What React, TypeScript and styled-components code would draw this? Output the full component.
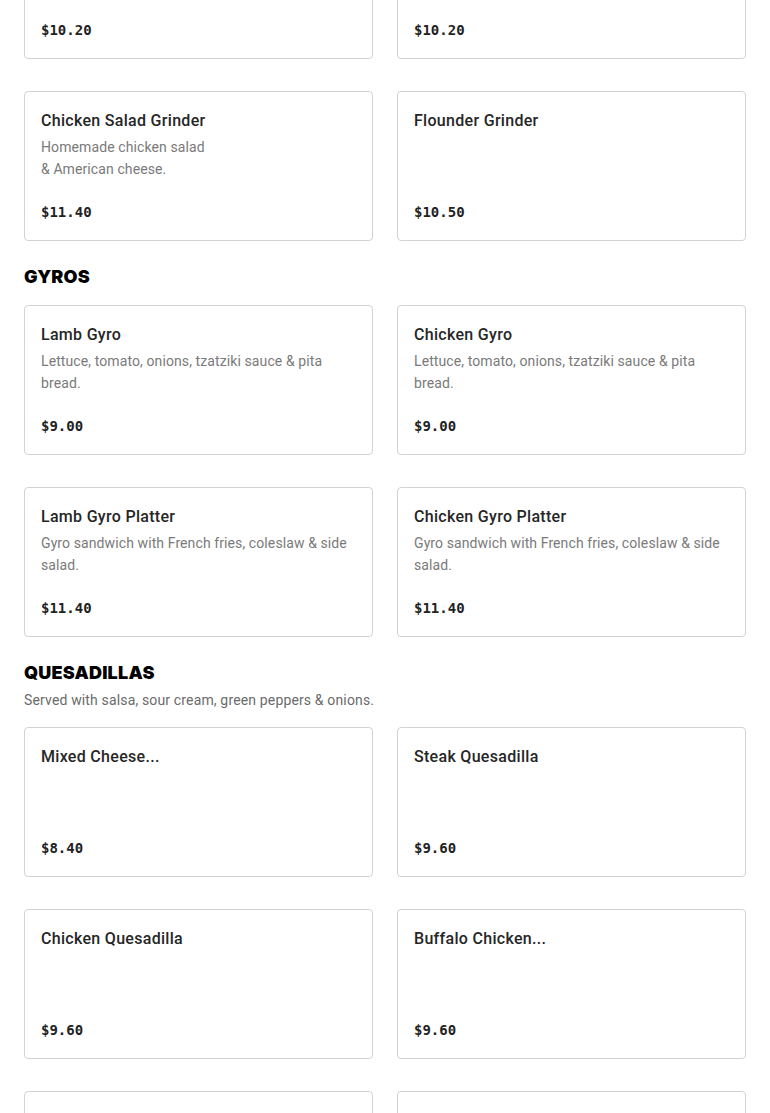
import React, { FC } from 'react'
import styled, { createGlobalStyle } from 'styled-components'

const GlobalStyle = createGlobalStyle`
  html, body {
    margin: 0;
    padding: 0;
    background: #fff;
  }
  body {
    font-family: Roboto, "Noto Sans", "Liberation Sans", sans-serif;
    color: #222;
    overflow: hidden;
  }
`

const Page = styled.main`
  padding: 0 24px 40px;
  // the view is scrolled into the middle of the menu
  margin-top: -91px;
`

const Section = styled.section`
  & + & {
    margin-top: 24px;
  }
`

const SectionHead = styled.header`
  margin-bottom: 16px;
`

const SectionTitle = styled.h2`
  margin: 0;
  font-family: Inter, Roboto, sans-serif;
  font-size: 18px;
  line-height: 24px;
  font-weight: 900;
  letter-spacing: 0.2px;
  color: #000;
  text-transform: uppercase;
`

const SectionNote = styled.p`
  margin: 4px 0 0;
  font-size: 14px;
  line-height: 22px;
  letter-spacing: 0.15px;
  color: #6b6b6b;
`

const Grid = styled.div`
  display: grid;
  grid-template-columns: 1fr 1fr;
  column-gap: 24px;
  row-gap: 32px;
`

const Card = styled.div`
  box-sizing: border-box;
  height: 150px;
  padding: 16px;
  border: 1px solid #d3d3d3;
  border-radius: 4px;
  display: flex;
  flex-direction: column;
  background: #fff;
`

const ItemName = styled.div`
  margin-top: 1px;
  font-size: 16px;
  line-height: 24px;
  font-weight: 500;
  letter-spacing: 0.3px;
  color: #262626;
  white-space: nowrap;
  overflow: hidden;
  text-overflow: ellipsis;
`

const ItemDesc = styled.div<{ $narrow?: boolean }>`
  margin-top: 3px;
  font-size: 14px;
  line-height: 22px;
  letter-spacing: 0.1px;
  color: #7a7a7a;
  max-width: ${(p) => (p.$narrow ? '175px' : 'none')};
`

const Price = styled.div`
  margin-top: auto;
  font-family: "DejaVu Sans Mono", "Liberation Mono", monospace;
  font-size: 14px;
  line-height: 23px;
  font-weight: 700;
  color: #222;
`

interface Item {
  name: string
  desc?: string
  price: string
  narrow?: boolean
}

interface MenuSection {
  title: string
  note?: string
  items: Item[]
}

const sections: MenuSection[] = [
  {
    title: 'Grinders',
    items: [
      { name: 'Meatball Grinder', price: '$10.20' },
      { name: 'Sausage Grinder', price: '$10.20' },
      {
        name: 'Chicken Salad Grinder',
        desc: 'Homemade chicken salad & American cheese.',
        price: '$11.40',
        narrow: true,
      },
      { name: 'Flounder Grinder', price: '$10.50' },
    ],
  },
  {
    title: 'Gyros',
    items: [
      { name: 'Lamb Gyro', desc: 'Lettuce, tomato, onions, tzatziki sauce & pita bread.', price: '$9.00' },
      { name: 'Chicken Gyro', desc: 'Lettuce, tomato, onions, tzatziki sauce & pita bread.', price: '$9.00' },
      { name: 'Lamb Gyro Platter', desc: 'Gyro sandwich with French fries, coleslaw & side salad.', price: '$11.40' },
      { name: 'Chicken Gyro Platter', desc: 'Gyro sandwich with French fries, coleslaw & side salad.', price: '$11.40' },
    ],
  },
  {
    title: 'Quesadillas',
    note: 'Served with salsa, sour cream, green peppers & onions.',
    items: [
      { name: 'Mixed Cheese...', price: '$8.40' },
      { name: 'Steak Quesadilla', price: '$9.60' },
      { name: 'Chicken Quesadilla', price: '$9.60' },
      { name: 'Buffalo Chicken...', price: '$9.60' },
      { name: 'Veggie...', price: '$9.00' },
      { name: 'Pulled Pork Quesadilla', price: '$9.60' },
    ],
  },
]

const MenuCard: FC<{ item: Item }> = ({ item }) => (
  <Card>
    <ItemName>{item.name}</ItemName>
    {item.desc && <ItemDesc $narrow={item.narrow}>{item.desc}</ItemDesc>}
    <Price>{item.price}</Price>
  </Card>
)

const App: FC = () => {
  return (
    <>
      <GlobalStyle />
      <Page>
        {sections.map((s) => (
          <Section key={s.title}>
            {/* first section's heading is scrolled out of view */}
            {s.title !== 'Grinders' && (
              <SectionHead>
                <SectionTitle>{s.title}</SectionTitle>
                {s.note && <SectionNote>{s.note}</SectionNote>}
              </SectionHead>
            )}
            <Grid>
              {s.items.map((it) => (
                <MenuCard key={it.name} item={it} />
              ))}
            </Grid>
          </Section>
        ))}
      </Page>
    </>
  )
}

export default App
